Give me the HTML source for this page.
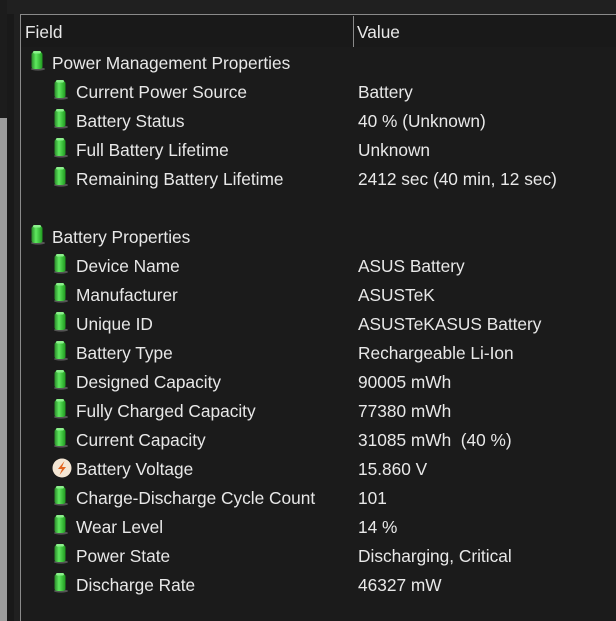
<!DOCTYPE html>
<html><head><style>
body{margin:0;width:616px;height:621px;background:#202020;overflow:hidden;position:relative;font-family:"Liberation Sans",sans-serif;color:#e8e8e8}
.a{position:absolute}
.r{position:absolute;height:29px;line-height:31px;font-size:17.3px;white-space:nowrap}
</style></head><body>
<div class="a" style="left:0;top:0;width:7px;height:621px;background:#1c1c1c"></div>
<div class="a" style="left:0;top:118px;width:7px;height:503px;background:#9c9c9c"></div>
<div class="a" style="left:7px;top:14px;width:7px;height:607px;background:#191919"></div>
<div class="a" style="left:20px;top:14px;width:596px;height:607px;background:#1b1b1b"></div>
<div class="a" style="left:20px;top:14px;width:596px;height:1px;background:#8a8a8a"></div>
<div class="a" style="left:20px;top:14px;width:1px;height:607px;background:#8a8a8a"></div>
<div class="a" style="left:21px;top:15px;width:595px;height:32px;background:#191919"></div>
<div class="a" style="left:353px;top:16px;width:1px;height:31px;background:#8a8a8a"></div>
<div class="r" style="left:25px;top:17px">Field</div>
<div class="r" style="left:357px;top:17px">Value</div>
<svg width="0" height="0" style="position:absolute"><defs>
<linearGradient id="g" x1="0" x2="1"><stop offset="0" stop-color="#2a8a2a"/><stop offset=".4" stop-color="#5fe85f"/><stop offset="1" stop-color="#1f9a1f"/></linearGradient>
<symbol id="bat" viewBox="0 0 16 20"><ellipse cx="8" cy="18" rx="7" ry="1.6" fill="#555"/><rect x="1.5" y="1" width="11" height="17" rx="2.5" fill="url(#g)"/><rect x="3" y="0" width="8" height="2.5" rx="1.2" fill="#8cf08c"/></symbol>
</defs></svg>
<svg class="a" style="left:30px;top:51px" width="16" height="20"><use href="#bat"/></svg><div class="r" style="left:52px;top:48px">Power Management Properties</div>
<svg class="a" style="left:53px;top:80px" width="16" height="20"><use href="#bat"/></svg><div class="r" style="left:76px;top:77px">Current Power Source</div><div class="r" style="left:358px;top:77px">Battery</div>
<svg class="a" style="left:53px;top:109px" width="16" height="20"><use href="#bat"/></svg><div class="r" style="left:76px;top:106px">Battery Status</div><div class="r" style="left:358px;top:106px">40 % (Unknown)</div>
<svg class="a" style="left:53px;top:138px" width="16" height="20"><use href="#bat"/></svg><div class="r" style="left:76px;top:135px">Full Battery Lifetime</div><div class="r" style="left:358px;top:135px">Unknown</div>
<svg class="a" style="left:53px;top:167px" width="16" height="20"><use href="#bat"/></svg><div class="r" style="left:76px;top:164px">Remaining Battery Lifetime</div><div class="r" style="left:358px;top:164px">2412 sec (40 min, 12 sec)</div>
<svg class="a" style="left:30px;top:225px" width="16" height="20"><use href="#bat"/></svg><div class="r" style="left:52px;top:222px">Battery Properties</div>
<svg class="a" style="left:53px;top:254px" width="16" height="20"><use href="#bat"/></svg><div class="r" style="left:76px;top:251px">Device Name</div><div class="r" style="left:358px;top:251px">ASUS Battery</div>
<svg class="a" style="left:53px;top:283px" width="16" height="20"><use href="#bat"/></svg><div class="r" style="left:76px;top:280px">Manufacturer</div><div class="r" style="left:358px;top:280px">ASUSTeK</div>
<svg class="a" style="left:53px;top:312px" width="16" height="20"><use href="#bat"/></svg><div class="r" style="left:76px;top:309px">Unique ID</div><div class="r" style="left:358px;top:309px">ASUSTeKASUS Battery</div>
<svg class="a" style="left:53px;top:341px" width="16" height="20"><use href="#bat"/></svg><div class="r" style="left:76px;top:338px">Battery Type</div><div class="r" style="left:358px;top:338px">Rechargeable Li-Ion</div>
<svg class="a" style="left:53px;top:370px" width="16" height="20"><use href="#bat"/></svg><div class="r" style="left:76px;top:367px">Designed Capacity</div><div class="r" style="left:358px;top:367px">90005 mWh</div>
<svg class="a" style="left:53px;top:399px" width="16" height="20"><use href="#bat"/></svg><div class="r" style="left:76px;top:396px">Fully Charged Capacity</div><div class="r" style="left:358px;top:396px">77380 mWh</div>
<svg class="a" style="left:53px;top:428px" width="16" height="20"><use href="#bat"/></svg><div class="r" style="left:76px;top:425px">Current Capacity</div><div class="r" style="left:358px;top:425px">31085 mWh&nbsp; (40 %)</div>
<svg class="a" style="left:52px;top:458px" width="20" height="20" viewBox="0 0 20 20"><circle cx="10" cy="10" r="9.5" fill="#f4e6d4"/><path d="M12.5 3 L6 11 H10 L7.5 17 L14 9 H10 Z" fill="#e2641e"/></svg><div class="r" style="left:76px;top:454px">Battery Voltage</div><div class="r" style="left:358px;top:454px">15.860 V</div>
<svg class="a" style="left:53px;top:486px" width="16" height="20"><use href="#bat"/></svg><div class="r" style="left:76px;top:483px">Charge-Discharge Cycle Count</div><div class="r" style="left:358px;top:483px">101</div>
<svg class="a" style="left:53px;top:515px" width="16" height="20"><use href="#bat"/></svg><div class="r" style="left:76px;top:512px">Wear Level</div><div class="r" style="left:358px;top:512px">14 %</div>
<svg class="a" style="left:53px;top:544px" width="16" height="20"><use href="#bat"/></svg><div class="r" style="left:76px;top:541px">Power State</div><div class="r" style="left:358px;top:541px">Discharging, Critical</div>
<svg class="a" style="left:53px;top:573px" width="16" height="20"><use href="#bat"/></svg><div class="r" style="left:76px;top:570px">Discharge Rate</div><div class="r" style="left:358px;top:570px">46327 mW</div>
</body></html>
